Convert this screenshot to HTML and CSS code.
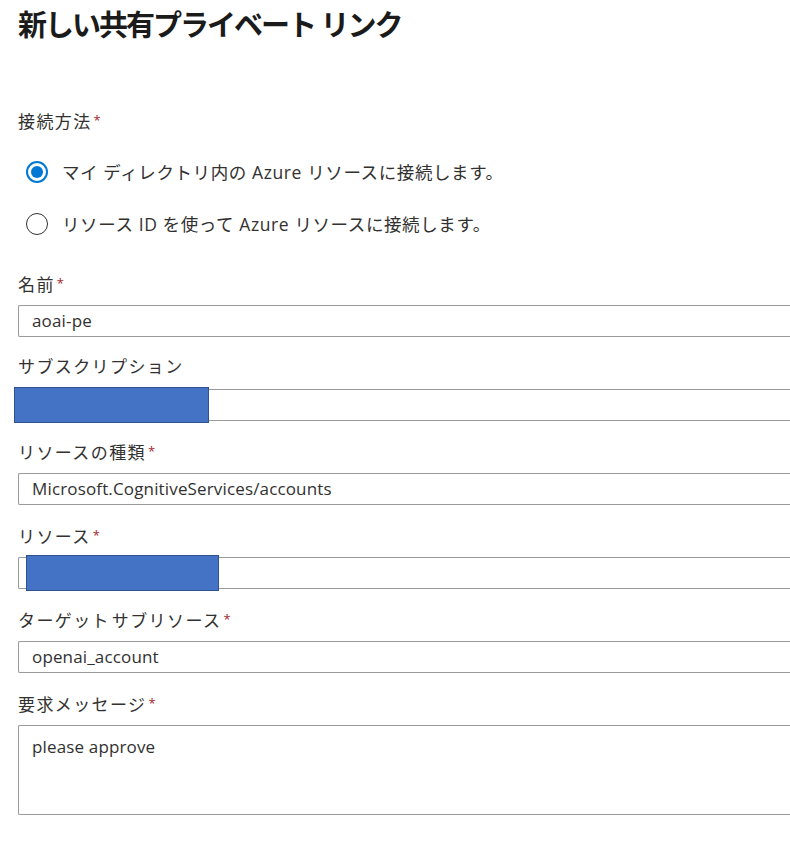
FILE: index.html
```html
<!DOCTYPE html>
<html lang="ja">
<head>
<meta charset="utf-8">
<title>新しい共有プライベート リンク</title>
<link rel="stylesheet" href="styles.css">
</head>
<body>
<main class="page">
  <h1 class="title">新しい共有プライベート リンク</h1>

  <div class="label method-label">接続方法<span class="req">*</span></div>
  <div class="radios">
    <div class="radio-row">
      <span class="radio checked"></span>
      <span class="radio-text">マイ ディレクトリ内の Azure リソースに接続します。</span>
    </div>
    <div class="radio-row">
      <span class="radio"></span>
      <span class="radio-text">リソース ID を使って Azure リソースに接続します。</span>
    </div>
  </div>

  <div class="fields">
    <div class="field">
      <div class="label">名前<span class="req">*</span></div>
      <div class="input">aoai-pe</div>
    </div>
    <div class="field">
      <div class="label">サブスクリプション</div>
      <div class="input"><span class="redact redact-sub"></span></div>
    </div>
    <div class="field">
      <div class="label">リソースの種類<span class="req">*</span></div>
      <div class="input">Microsoft.CognitiveServices/accounts</div>
    </div>
    <div class="field">
      <div class="label">リソース<span class="req">*</span></div>
      <div class="input"><span class="redact redact-res"></span></div>
    </div>
    <div class="field">
      <div class="label">ターゲット サブリソース<span class="req">*</span></div>
      <div class="input">openai_account</div>
    </div>
    <div class="field">
      <div class="label">要求メッセージ<span class="req">*</span></div>
      <div class="input textarea">please approve</div>
    </div>
  </div>
</main>
</body>
</html>
```

FILE: styles.css
```css
html, body {
  margin: 0;
  padding: 0;
  background: #ffffff;
}

body {
  font-family: "Open Sans", "Noto Sans CJK JP", sans-serif;
  color: #323130;
  overflow: hidden;
}

.page {
  padding-left: 18px;
}

.title {
  margin: 0;
  padding-top: 5px;
  font-size: 29px;
  line-height: 40px;
  font-weight: 600;
  color: #1b1b1b;
  letter-spacing: -2px;
}

.label {
  font-size: 17px;
  line-height: 24px;
  height: 24px;
  color: #323130;
  letter-spacing: 1.4px;
  word-spacing: -4px;
}

.req {
  color: #a4262c;
  margin-left: 2px;
  font-size: 13px;
  vertical-align: 3px;
  letter-spacing: 0;
}

.method-label {
  margin-top: 63px;
}

.radios {
  display: flex;
  flex-direction: column;
  gap: 28px;
  margin-top: 28px;
  padding-left: 8px;
}

.radio-row {
  display: flex;
  align-items: center;
  height: 24px;
  gap: 14px;
}

.radio-text {
  font-size: 17.5px;
  line-height: 24px;
  color: #323130;
  letter-spacing: 0.6px;
}

.radio {
  width: 22px;
  height: 22px;
  box-sizing: border-box;
  border: 1.5px solid #323130;
  border-radius: 50%;
  flex: none;
  position: relative;
}

.radio.checked {
  border-color: #0078d4;
  border-width: 2px;
}

.radio.checked::after {
  content: "";
  position: absolute;
  left: 3px;
  top: 3px;
  width: 12px;
  height: 12px;
  border-radius: 50%;
  background: #0078d4;
}

.fields {
  display: flex;
  flex-direction: column;
  gap: 18px;
  margin-top: 35px;
}

.field {
  display: flex;
  flex-direction: column;
  gap: 10px;
}

.input {
  position: relative;
  height: 32px;
  box-sizing: border-box;
  border: 1.5px solid #9a9a9a;
  border-right: none;
  border-radius: 2px 0 0 2px;
  padding: 0 13px;
  font-size: 17px;
  line-height: 30px;
  letter-spacing: 0.15px;
  color: #323130;
}

.textarea {
  height: 90px;
  padding-top: 9px;
  line-height: 24px;
}

.redact {
  position: absolute;
  background: #4472c4;
  border: 1.5px solid #2f528f;
  box-sizing: border-box;
  height: 36px;
}

.redact-sub {
  left: -5px;
  top: -3.5px;
  width: 195px;
}

.redact-res {
  left: 7px;
  top: -3.5px;
  width: 193px;
}
```
